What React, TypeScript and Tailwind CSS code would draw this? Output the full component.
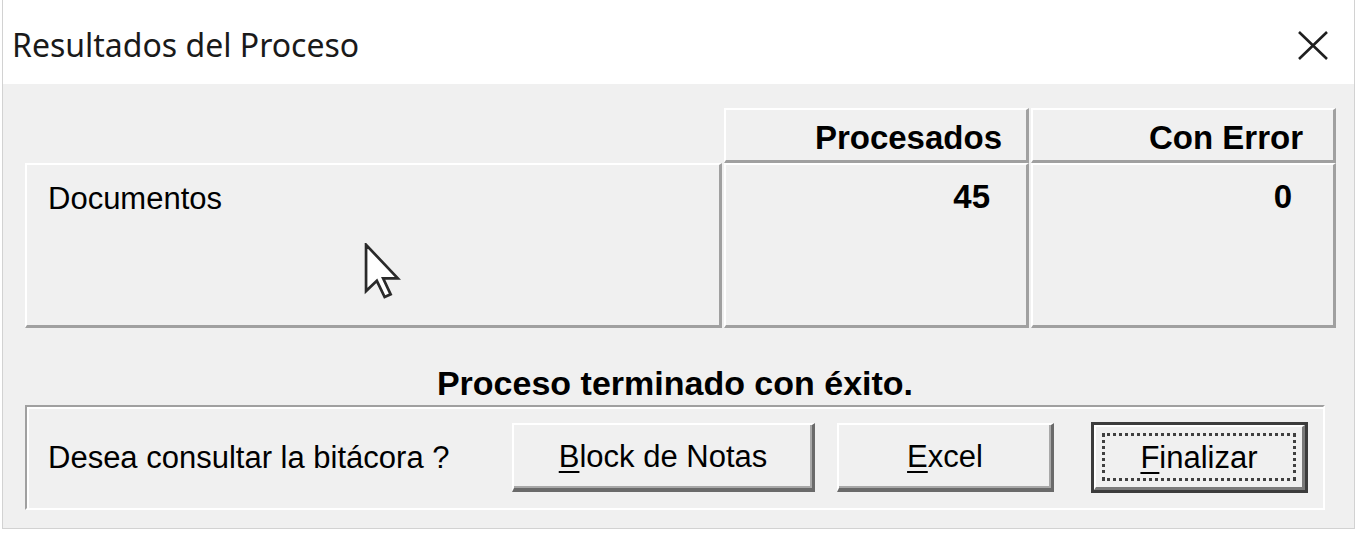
import React from 'react'

const SANS = { fontFamily: '"Liberation Sans", Arial, sans-serif' }

function HeaderCell({ children, pr }: { children: React.ReactNode; pr: string }) {
  return (
    <div
      className={`h-[55px] border-t-2 border-l-2 border-white border-r-[3px] border-b-[3px] border-r-[#a0a0a0] border-b-[#a0a0a0] pt-[11px] text-right text-[33px] font-bold leading-[33px] ${pr}`}
    >
      {children}
    </div>
  )
}

function Button({ label, width, isDefault }: { label: string; width: string; isDefault?: boolean }) {
  const first = label.slice(0, 1)
  const rest = label.slice(1)
  const text = (
    <span>
      <span className="underline decoration-[2px] underline-offset-[4px]">{first}</span>
      {rest}
    </span>
  )
  if (isDefault) {
    return (
      <div className={`h-[71px] ${width} border-[3px] border-[#3c3c3c]`}>
        <div className="flex h-full w-full border-t-2 border-l-2 border-white border-r-[3px] border-b-[3px] border-r-[#7a7a7a] border-b-[#7a7a7a] bg-[#f0f0f0] p-[6px]">
          <div className="flex h-full w-full items-center justify-center border-[3px] border-dotted border-[#404040] text-[31px] leading-[31px]">
            {text}
          </div>
        </div>
      </div>
    )
  }
  return (
    <div
      className={`flex h-[69px] ${width} items-center justify-center border-t-2 border-l-2 border-white border-r-[3px] border-b-[4px] border-r-[#6a6a6a] border-b-[#6a6a6a] bg-[#f0f0f0] text-[31px] leading-[31px] shadow-[inset_-2px_-2px_0_#a8a8a8]`}
    >
      {text}
    </div>
  )
}

export default function App() {
  return (
    <div className="relative h-[560px] w-[1360px] overflow-hidden bg-white text-black" style={SANS}>
      <div className="ml-[2px] flex h-[529px] w-[1353px] flex-col border-x border-b border-[#d2d2d2]">
        {/* barra de título */}
        <div className="flex h-[84px] shrink-0 items-center justify-between bg-white pl-[9px] pr-[25px]">
          <span
            className="pt-[6px] text-[32px] leading-[40px] text-[#1a1a1a]"
            style={{ fontFamily: '"Noto Sans", "Open Sans", sans-serif' }}
          >
            Resultados del Proceso
          </span>
          <svg width="32" height="31" viewBox="0 0 32 31" className="mt-[6px]">
            <path d="M2 2 L30 29 M30 2 L2 29" stroke="#1f1f1f" strokeWidth="2.6" fill="none" />
          </svg>
        </div>

        {/* contenido */}
        <div className="flex-1 bg-[#f0f0f0] pl-[22px] pt-[24px]">
          <div className="grid grid-cols-[697px_305px_305px] gap-x-[2px]">
            <div />
            <HeaderCell pr="pr-[24px]">Procesados</HeaderCell>
            <HeaderCell pr="pr-[30px]">Con Error</HeaderCell>

            <div className="h-[165px] border-t-2 border-l-2 border-white border-r-[3px] border-b-[3px] border-r-[#a0a0a0] border-b-[#a0a0a0] pl-[21px] pt-[18px] text-[31px] leading-[31px]">
              Documentos
            </div>
            <div className="h-[165px] border-t-2 border-l-2 border-white border-r-[3px] border-b-[3px] border-r-[#a0a0a0] border-b-[#a0a0a0] pr-[36px] pt-[15px] text-right text-[33px] font-bold leading-[33px]">
              45
            </div>
            <div className="h-[165px] border-t-2 border-l-2 border-white border-r-[3px] border-b-[3px] border-r-[#a0a0a0] border-b-[#a0a0a0] pr-[41px] pt-[15px] text-right text-[33px] font-bold leading-[33px]">
              0
            </div>
          </div>

          <p className="mt-[38px] w-[1300px] text-center text-[34px] font-bold leading-[34px]">
            Proceso terminado con éxito.
          </p>

          <div className="mt-[5px] flex h-[105px] w-[1300px] items-center border-t-2 border-l-2 border-[#a0a0a0] border-b-2 border-r-2 border-b-white border-r-white pl-[21px] pr-[15px] shadow-[inset_2px_2px_0_#ffffff]">
            <span className="text-[31px] leading-[31px]">Desea consultar la bitácora ?</span>
            <div className="ml-auto flex items-center">
              <Button label="Block de Notas" width="w-[303px]" />
              <div className="w-[22px]" />
              <Button label="Excel" width="w-[217px]" />
              <div className="w-[37px]" />
              <Button label="Finalizar" width="w-[217px]" isDefault />
            </div>
          </div>
        </div>
      </div>

      {/* puntero del ratón */}
      <svg
        width="38"
        height="57"
        viewBox="0 0 12.5 19"
        className="absolute left-[364px] top-[243px]"
      >
        <path
          d="M0.6 0.6 L0.6 16 L4.2 12.6 L6.8 18 L8.8 17.1 L6.3 11.8 L11.2 11.8 Z"
          fill="#ffffff"
          stroke="#2a2a2a"
          strokeWidth="0.9"
          strokeLinejoin="miter"
        />
      </svg>
    </div>
  )
}
